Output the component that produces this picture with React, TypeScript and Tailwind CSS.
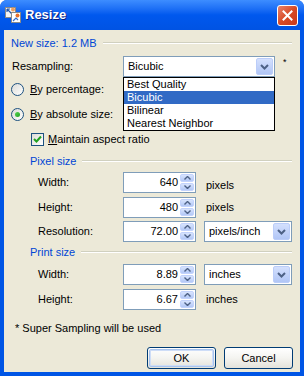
import React from 'react';

const font = "font-['Tahoma','Liberation_Sans',sans-serif]";

// small blue up/down arrow used by spinners
const Chevron = ({ dir }: { dir: 'up' | 'down' }) => (
  <svg width="7" height="4" viewBox="0 0 7 4" className="block">
    <path
      d={dir === 'up' ? 'M0.5 3.5 L3.5 0.5 L6.5 3.5' : 'M0.5 0.5 L3.5 3.5 L6.5 0.5'}
      stroke="#4D6185"
      strokeWidth="1.4"
      fill="none"
    />
  </svg>
);

const SectionHeader = ({ label, indent }: { label: string; indent: string }) => (
  <div className={`flex items-center h-[14px] ${indent} pr-[8px]`}>
    <span className="text-[#0046D5] whitespace-nowrap">{label}</span>
    <div className="flex-1 ml-[6px] flex flex-col">
      <div className="h-px bg-[#D0D0BF]" />
      <div className="h-px bg-white" />
    </div>
  </div>
);

const SpinBox = ({ value }: { value: string }) => (
  <div className="w-[73px] h-[21px] border border-[#7F9DB9] bg-white flex">
    <div className="flex-1 flex items-center justify-end pr-[2px]">{value}</div>
    <div className="w-[15px] flex flex-col gap-px py-px pr-px">
      <div className="flex-1 rounded-[2px] bg-gradient-to-b from-[#D8E4FD] to-[#B3C8F6] border border-[#C3D3FD] flex items-center justify-center">
        <Chevron dir="up" />
      </div>
      <div className="flex-1 rounded-[2px] bg-gradient-to-b from-[#D8E4FD] to-[#B3C8F6] border border-[#C3D3FD] flex items-center justify-center">
        <Chevron dir="down" />
      </div>
    </div>
  </div>
);

const ComboButton = () => (
  <div className="w-[17px] h-full rounded-[2px] bg-gradient-to-b from-[#D4E0FD] to-[#B1C6F6] border border-[#BBCDF9] flex items-center justify-center">
    <svg width="9" height="6" viewBox="0 0 9 6">
      <path d="M1 1 L4.5 4.5 L8 1" stroke="#4D6185" strokeWidth="2" fill="none" />
    </svg>
  </div>
);

const Combo = ({ value, width }: { value: string; width: string }) => (
  <div className={`${width} h-[21px] border border-[#7F9DB9] bg-white flex items-center`}>
    <span className="flex-1 pl-[4px]">{value}</span>
    <div className="h-full py-px pr-px">
      <ComboButton />
    </div>
  </div>
);

const Radio = ({ checked }: { checked?: boolean }) => (
  <div className="w-[13px] h-[13px] rounded-full border border-[#1C5180] bg-gradient-to-br from-[#DCDCD7] to-white flex items-center justify-center">
    {checked && <div className="w-[5px] h-[5px] rounded-full bg-gradient-to-br from-[#55D551] to-[#21A121]" />}
  </div>
);

const Checkbox = () => (
  <div className="w-[13px] h-[13px] border border-[#1C5180] bg-gradient-to-br from-[#DCDCD7] to-white flex items-center justify-center">
    <svg width="9" height="9" viewBox="0 0 9 9">
      <path d="M1 4 L3.5 6.5 L8 1.5" stroke="#21A121" strokeWidth="2" fill="none" />
    </svg>
  </div>
);

const XPButton = ({ label, isDefault }: { label: string; isDefault?: boolean }) => (
  <div className="w-[69px] h-[22px] rounded-[3px] border border-[#003C74] bg-gradient-to-b from-white via-[#F4F4F0] to-[#E3E2DA] p-px">
    <div
      className={`w-full h-full rounded-[2px] flex items-center justify-center ${
        isDefault ? 'border border-[#A8C4EE] shadow-[inset_0_0_0_1px_#CEDDF7]' : ''
      }`}
    >
      {label}
    </div>
  </div>
);

const FieldRow = ({ label, value, extra, mt }: { label: string; value: string; extra: React.ReactNode; mt: string }) => (
  <div className={`flex items-center h-[21px] ${mt} pl-[34px]`}>
    <span className="w-[85px]">{label}</span>
    <SpinBox value={value} />
    {extra}
  </div>
);

const TitleIcon = () => (
  <svg width="16" height="16" viewBox="0 0 16 16">
    <rect x="0.5" y="0.5" width="10" height="10" fill="#F4F4F4" stroke="#8A8A8A" />
    <path d="M2 2 L7 7 M2 2 L5 2 M2 2 L2 5" stroke="#2255AA" strokeWidth="1.2" fill="none" />
    <rect x="6.5" y="5.5" width="9" height="10" fill="#FFFFFF" stroke="#8A8A8A" />
    <circle cx="12.5" cy="8.5" r="2" fill="#E8702A" />
    <path d="M8 14 L11 11 L13 13" stroke="#3A6EC8" strokeWidth="1.2" fill="none" />
    <circle cx="8" cy="2.5" r="2" fill="#F0A060" />
  </svg>
);

export default function App() {
  return (
    <div className={`${font} text-[11px] text-black w-[304px] h-[376px] bg-[#0055E5] rounded-t-[7px] overflow-hidden flex flex-col`}>
      {/* title bar */}
      <div className="h-[30px] flex items-center bg-gradient-to-b from-[#3D8DFF] via-[#0058EE] to-[#0053E3] pl-[5px] pr-[6px]">
        <TitleIcon />
        <span className="ml-[4px] text-white font-bold text-[13px] font-['Trebuchet_MS','Liberation_Sans',sans-serif] [text-shadow:1px_1px_0_#0A1E7A]">
          Resize
        </span>
        <div className="ml-auto w-[21px] h-[21px] rounded-[3px] border border-white bg-gradient-to-br from-[#E7826A] via-[#D84A25] to-[#C8381A] flex items-center justify-center">
          <svg width="11" height="11" viewBox="0 0 11 11">
            <path d="M1.5 1.5 L9.5 9.5 M9.5 1.5 L1.5 9.5" stroke="white" strokeWidth="2" strokeLinecap="square" />
          </svg>
        </div>
      </div>

      {/* body */}
      <div className="relative w-[296px] h-[342px] ml-[4px] bg-[#ECE9D8] flex flex-col">
        <div className="mt-[6px]">
          <SectionHeader label="New size: 1.2 MB" indent="pl-[7px]" />
        </div>

        <div className="flex items-center h-[21px] mt-[6px] pl-[8px]">
          <span className="w-[111px]">Resampling:</span>
          <Combo value="Bicubic" width="w-[152px]" />
          <span className="ml-[8px] self-start text-[9px] leading-none mt-[2px]">*</span>
        </div>

        {/* open dropdown list */}
        <div className="absolute left-[119px] top-[47px] w-[152px] border border-black bg-white flex flex-col z-10">
          <div className="h-[13px] leading-[13px] pl-[3px]">Best Quality</div>
          <div className="h-[13px] leading-[13px] pl-[3px] bg-[#316AC5] text-white">Bicubic</div>
          <div className="h-[13px] leading-[13px] pl-[3px]">Bilinear</div>
          <div className="h-[13px] leading-[13px] pl-[3px]">Nearest Neighbor</div>
        </div>

        <div className="flex items-center h-[14px] mt-[5px] pl-[7px] gap-[6px]">
          <Radio />
          <span><span className="underline">B</span>y percentage:</span>
        </div>
        <div className="flex items-center h-[14px] mt-[11px] pl-[7px] gap-[6px]">
          <Radio checked />
          <span><span className="underline">B</span>y absolute size:</span>
        </div>
        <div className="flex items-center h-[14px] mt-[11px] pl-[27px] gap-[4px]">
          <Checkbox />
          <span><span className="underline">M</span>aintain aspect ratio</span>
        </div>

        <div className="mt-[8px]">
          <SectionHeader label="Pixel size" indent="pl-[26px]" />
        </div>
        <FieldRow label="Width:" value="640" mt="mt-[4px]" extra={<span className="ml-[10px] mt-[5px]">pixels</span>} />
        <FieldRow label="Height:" value="480" mt="mt-[4px]" extra={<span className="ml-[10px]">pixels</span>} />
        <FieldRow
          label="Resolution:"
          value="72.00"
          mt="mt-[3px]"
          extra={
            <div className="ml-[8px]">
              <Combo value="pixels/inch" width="w-[88px]" />
            </div>
          }
        />

        <div className="mt-[3px]">
          <SectionHeader label="Print size" indent="pl-[26px]" />
        </div>
        <FieldRow
          label="Width:"
          value="8.89"
          mt="mt-[5px]"
          extra={
            <div className="ml-[8px]">
              <Combo value="inches" width="w-[88px]" />
            </div>
          }
        />
        <FieldRow label="Height:" value="6.67" mt="mt-[4px]" extra={<span className="ml-[10px]">inches</span>} />

        <div className="h-[14px] mt-[11px] pl-[11px] flex items-center">* Super Sampling will be used</div>

        <div className="flex justify-end gap-[8px] mt-[12px] pr-[7px]">
          <XPButton label="OK" isDefault />
          <XPButton label="Cancel" />
        </div>
      </div>
    </div>
  );
}
